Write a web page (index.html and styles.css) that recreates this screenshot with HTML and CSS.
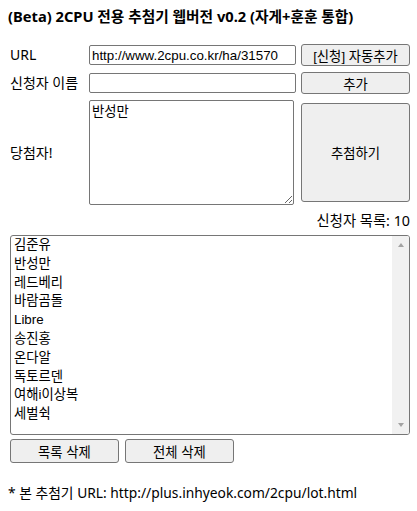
FILE: index.html
```html
<!DOCTYPE html>
<html lang="ko">
<head>
<meta charset="utf-8">
<title>2CPU 추첨기</title>
<link rel="stylesheet" href="styles.css">
</head>
<body>
<h1 class="title">(Beta) 2CPU 전용 추첨기 웹버전 v0.2 (자게+훈훈 통합)</h1>
<div class="form">
  <label class="lbl">URL</label>
  <input class="field" type="text" value="http://www.2cpu.co.kr/ha/31570">
  <button class="btn">[신청] 자동추가</button>
  <label class="lbl">신청자 이름</label>
  <input class="field" type="text" value="">
  <button class="btn">추가</button>
  <label class="lbl">당첨자!</label>
  <textarea class="winner">반성만</textarea>
  <button class="btn btn-draw">추첨하기</button>
</div>
<div class="count">신청자 목록: 10</div>
<div class="listbox">
  <ul class="items">
    <li>김준유</li>
    <li>반성만</li>
    <li>레드베리</li>
    <li>바람곰돌</li>
    <li>Libre</li>
    <li>송진홍</li>
    <li>온다알</li>
    <li>독토르덴</li>
    <li>여해i이상복</li>
    <li>세벌쉭</li>
  </ul>
  <div class="scrollbar"><span class="arrow up"></span><span class="arrow down"></span></div>
</div>
<div class="actions">
  <button class="btn btn-act">목록 삭제</button>
  <button class="btn btn-act">전체 삭제</button>
</div>
<p class="note">* 본 추첨기 URL: http://plus.inhyeok.com/2cpu/lot.html</p>
</body>
</html>
```
FILE: styles.css
```css
body {
  margin: 0;
  padding: 8px;
  font-family: "Noto Sans", "Noto Sans CJK KR", sans-serif;
  color: #000;
  background: #fff;
}
.title {
  margin: 0;
  font-size: 14.7px;
  font-weight: bold;
  line-height: 16px;
}
.form {
  margin: 20px 0 0 2px;
  display: grid;
  grid-template-columns: 74px 207px 109px;
  grid-template-rows: 22px 22px 105px;
  column-gap: 5px;
  row-gap: 6px;
}
.lbl {
  align-self: center;
  font-size: 14px;
  line-height: 18px;
  white-space: nowrap;
}
.field {
  align-self: center;
  box-sizing: border-box;
  width: 207px;
  height: 20px;
  margin: 0;
  padding: 1px 2px;
  border: 1px solid #767676;
  border-radius: 2px;
  font-family: "Liberation Sans", "Noto Sans CJK KR", sans-serif;
  font-size: 13.33px;
  color: #000;
  background: #fff;
}
.winner {
  box-sizing: border-box;
  width: 205px;
  height: 105px;
  margin: 0;
  padding: 2px;
  border: 1px solid #767676;
  border-radius: 2px;
  font-family: "Noto Sans CJK KR", sans-serif;
  font-size: 13.33px;
  line-height: 16px;
  color: #000;
}
.btn {
  box-sizing: border-box;
  height: 22px;
  margin: 0;
  padding: 0 6px;
  border: 1px solid #767676;
  border-radius: 3px;
  background: #efefef;
  font-family: "Liberation Sans", "Noto Sans CJK KR", sans-serif;
  font-size: 13.33px;
  color: #000;
  align-self: center;
}
.btn-draw {
  height: 99px;
}
.count {
  margin: 7px 0 0 2px;
  width: 400px;
  text-align: right;
  font-size: 14.3px;
  line-height: 18px;
}
.listbox {
  box-sizing: border-box;
  margin: 5px 0 0 2px;
  width: 400px;
  height: 200px;
  border: 1px solid #767676;
  border-radius: 3px;
  display: flex;
  overflow: hidden;
}
.items {
  flex: 1;
  list-style: none;
  margin: 0;
  padding: 0 0 0 3px;
  font-family: "Liberation Sans", "Noto Sans CJK KR", sans-serif;
  font-size: 13.33px;
  line-height: 18.8px;
}
.scrollbar {
  width: 17px;
  background: #f1f1f1;
  display: flex;
  flex-direction: column;
  justify-content: space-between;
  align-items: center;
  padding: 7px 0;
}
.arrow {
  width: 0;
  height: 0;
  border-left: 3.5px solid transparent;
  border-right: 3.5px solid transparent;
}
.arrow.up {
  border-bottom: 4px solid #a3a3a3;
}
.arrow.down {
  border-top: 4px solid #a3a3a3;
}
.actions {
  margin: 4px 0 0 2px;
  display: flex;
  gap: 6px;
}
.btn-act {
  width: 109px;
  height: 24px;
}
.note {
  margin: 21px 0 0;
  font-size: 13.8px;
  line-height: 18px;
}
```
